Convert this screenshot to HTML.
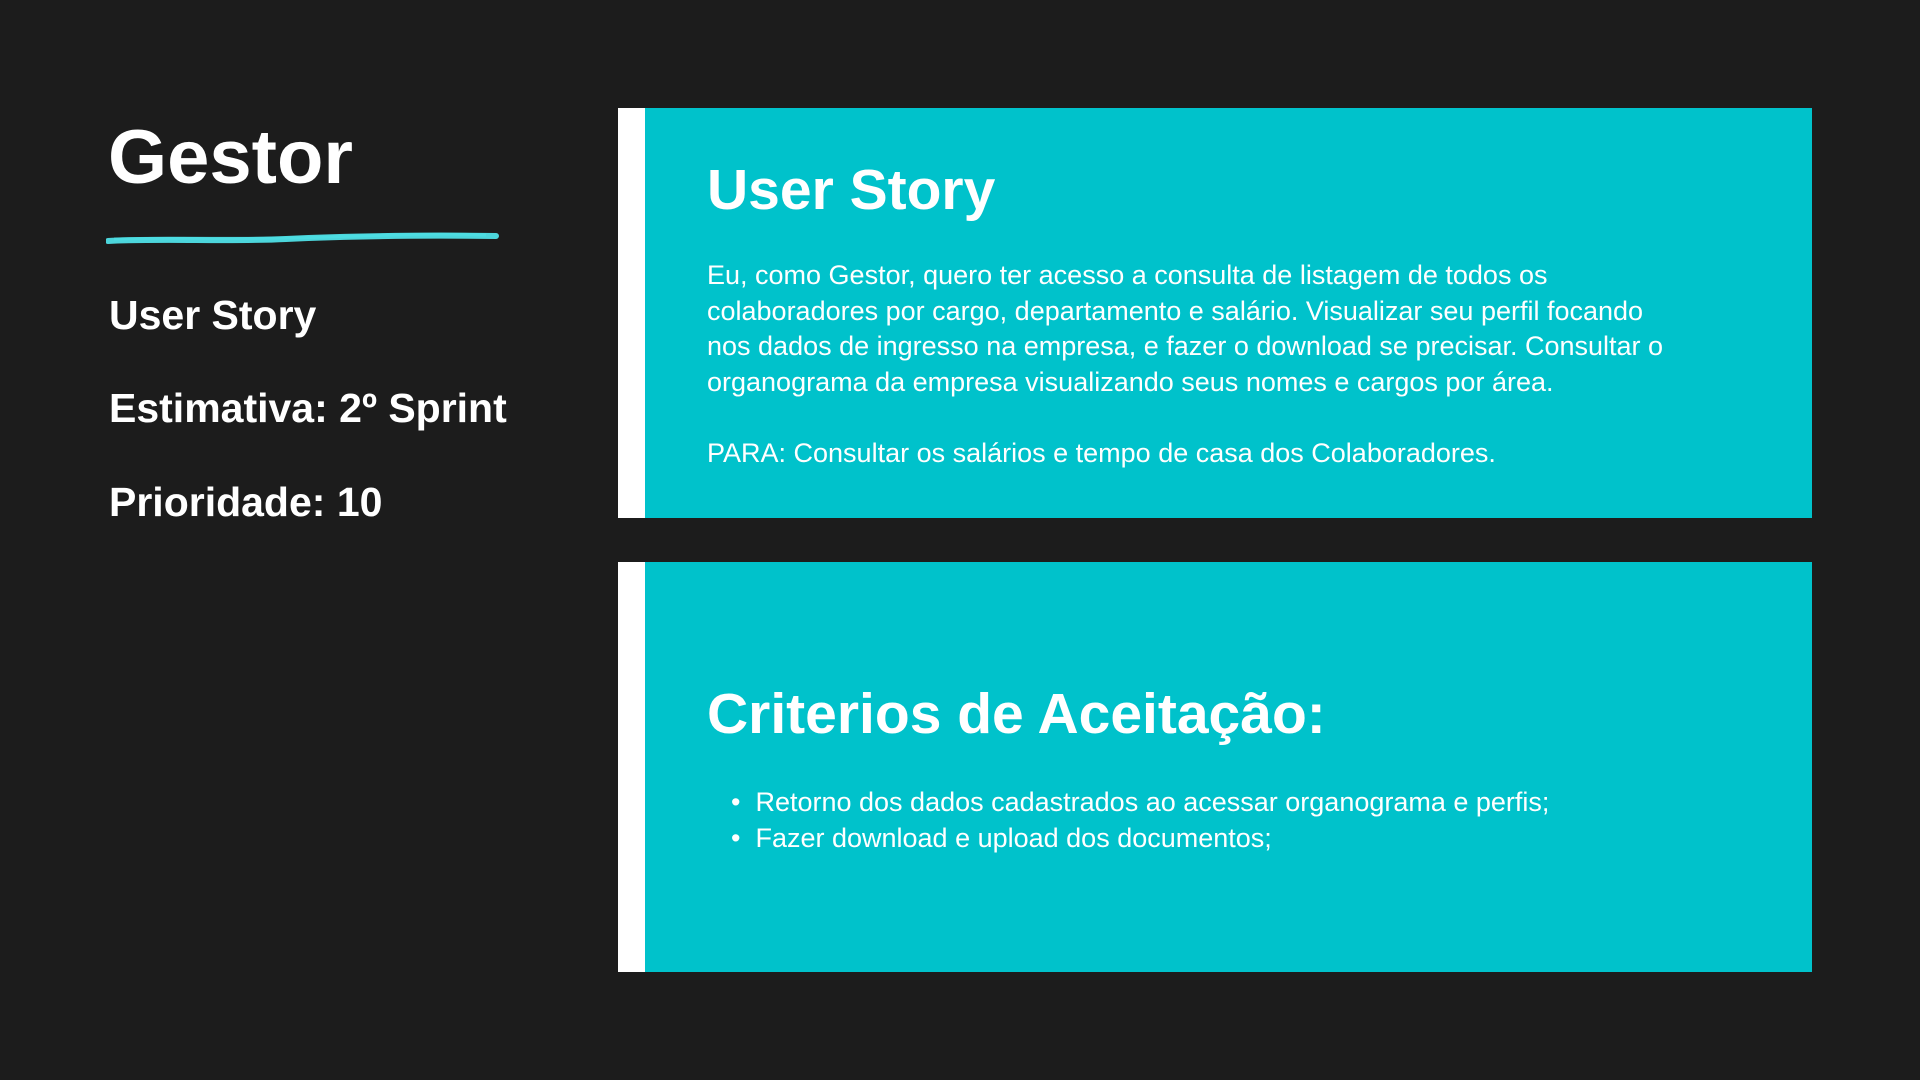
<!DOCTYPE html>
<html><head><meta charset="utf-8"><style>
html,body{margin:0;padding:0;width:1920px;height:1080px;background:#1c1c1c;overflow:hidden;font-family:"Liberation Sans",sans-serif;color:#fff}
.a{position:absolute;white-space:nowrap}
.h{font-weight:bold;line-height:1}
.box{position:absolute;left:618px;width:1194px;background:#00c2cb}
.bar{position:absolute;left:0;top:0;bottom:0;width:27px;background:#fff}
.p{font-size:27px;line-height:35.7px}
</style></head><body>
<div class="a h" style="left:108px;top:120px;font-size:76px">Gestor</div>
<svg class="a" style="left:106px;top:228px" width="394" height="20" viewBox="0 0 394 20">
<path d="M2 13 C60 10 120 14 180 11 C240 8 300 7 390 8" stroke="#4fdfe6" stroke-width="6" fill="none" stroke-linecap="round" opacity=".95"/>
<path d="M8 11 C80 9 150 12 220 9 C280 7 330 5 380 7" stroke="#4fdfe6" stroke-width="3" fill="none" opacity=".7"/>
</svg>
<div class="a h" style="left:109px;top:295px;font-size:41px">User Story</div>
<div class="a h" style="left:109px;top:388px;font-size:41px">Estimativa: 2º Sprint</div>
<div class="a h" style="left:109px;top:482px;font-size:41px">Prioridade: 10</div>

<div class="box" style="top:108px;height:410px"><div class="bar"></div></div>
<div class="box" style="top:562px;height:410px"><div class="bar"></div></div>

<div class="a h" style="left:707px;top:162px;font-size:57px">User Story</div>
<div class="a p" style="left:707px;top:258px">Eu, como Gestor, quero ter acesso a consulta de listagem de todos os<br>colaboradores por cargo, departamento e salário. Visualizar seu perfil focando<br>nos dados de ingresso na empresa, e fazer o download se precisar. Consultar o<br>organograma da empresa visualizando seus nomes e cargos por área.</div>
<div class="a p" style="left:707px;top:436px">PARA: Consultar os salários e tempo de casa dos Colaboradores.</div>

<div class="a h" style="left:707px;top:686px;font-size:57px">Criterios de Aceitação:</div>
<div class="a p" style="left:731px;top:784px;line-height:36px">•&nbsp; Retorno dos dados cadastrados ao acessar organograma e perfis;<br>•&nbsp; Fazer download e upload dos documentos;</div>
</body></html>
